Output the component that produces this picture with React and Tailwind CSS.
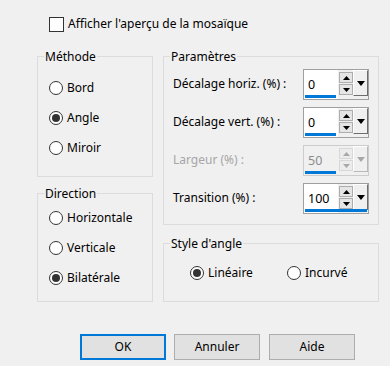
import React from "react";

function Arrow({ up, color, w = 7, h = 4 }) {
  return (
    <svg width={w} height={h} viewBox={`0 0 ${w} ${h}`} className="block">
      {up ? (
        <polygon points={`0,${h} ${w},${h} ${w / 2},0`} fill={color} />
      ) : (
        <polygon points={`0,0 ${w},0 ${w / 2},${h}`} fill={color} />
      )}
    </svg>
  );
}

function Spin({ value, disabled, bar }) {
  const arrow = disabled ? "#a8a8a8" : "#000000";
  return (
    <div
      className={`relative flex w-[66px] h-[31px] border bg-[#f0f0f0] ${
        disabled ? "border-[#cccccc]" : "border-[#a0a0a0]"
      }`}
    >
      <div
        className={`w-[34px] h-full flex items-center pl-[4px] ${
          disabled ? "bg-[#f0f0f0] text-[#8c8c8c]" : "bg-white text-black"
        }`}
      >
        <span className="text-[12.5px] leading-[16px]">{value}</span>
      </div>
      <div className="ml-[1px] w-[14px] flex flex-col gap-[1px] pt-[2px]">
        <div
          className={`h-[11px] border flex items-center justify-center ${
            disabled ? "border-[#d8d8d8] bg-[#ececec]" : "border-[#adadad] bg-[#e5e5e5]"
          }`}
        >
          <Arrow up color={arrow} />
        </div>
        <div
          className={`h-[11px] border flex items-center justify-center ${
            disabled ? "border-[#d8d8d8] bg-[#ececec]" : "border-[#adadad] bg-[#e5e5e5]"
          }`}
        >
          <Arrow color={arrow} />
        </div>
      </div>
      <div
        className={`w-[15px] h-[26px] bg-[#f0f0f0] border-t border-l border-t-white border-l-white border-r border-b flex items-center justify-center ${
          disabled ? "border-r-[#b8b8b8] border-b-[#b8b8b8]" : "border-r-[#6d6d6d] border-b-[#6d6d6d]"
        }`}
      >
        <Arrow color={arrow} w={8} h={5} />
      </div>
      <div
        className="absolute left-[1px] bottom-[1px] h-[3px] bg-[#0078d7]"
        style={{ width: bar }}
      />
    </div>
  );
}

function Radio({ label, checked }) {
  return (
    <div className="flex items-center h-[16px]">
      <div className="w-[14px] h-[14px] rounded-full border border-[#333333] bg-white flex items-center justify-center shrink-0">
        {checked && <div className="w-[8px] h-[8px] rounded-full bg-[#333333]" />}
      </div>
      <span className="ml-[4px] leading-[16px]">{label}</span>
    </div>
  );
}

function Group({ title, className, children }) {
  return (
    <div className={`relative border border-[#dcdcdc] ${className}`}>
      <span className="absolute -top-[8px] left-[6px] px-[1px] bg-[#f0f0f0] leading-[16px]">
        {title}
      </span>
      {children}
    </div>
  );
}

function Row({ label, value, disabled, bar }) {
  return (
    <div className="flex items-center h-[31px]">
      <span
        className={`w-[130px] leading-[16px] -mt-[2px] ${
          disabled ? "text-[#a6a6a6]" : "text-black"
        }`}
      >
        {label}
      </span>
      <Spin value={value} disabled={disabled} bar={bar} />
    </div>
  );
}

export default function App() {
  return (
    <div className="w-[390px] h-[366px] bg-[#f0f0f0] text-black text-[12px] font-['Noto_Sans',sans-serif] overflow-hidden">
      <div className="pt-[16px] pl-[49px] flex items-center">
        <div className="w-[15px] h-[15px] border border-[#333333] bg-white shrink-0" />
        <span className="ml-[4px] leading-[16px]">Afficher l'aperçu de la mosaïque</span>
      </div>

      <div className="flex mt-[24px] ml-[37px]">
        <div className="w-[116px] flex flex-col">
          <Group title="Méthode" className="h-[121px] pt-[23px] pl-[11px]">
            <div className="flex flex-col gap-[14px]">
              <Radio label="Bord" />
              <Radio label="Angle" checked />
              <Radio label="Miroir" />
            </div>
          </Group>
          <Group title="Direction" className="mt-[16px] h-[109px] pt-[16px] pl-[11px]">
            <div className="flex flex-col gap-[14px]">
              <Radio label="Horizontale" />
              <Radio label="Verticale" />
              <Radio label="Bilatérale" checked />
            </div>
          </Group>
        </div>

        <div className="ml-[10px] w-[216px] flex flex-col">
          <Group title="Paramètres" className="h-[169px] pt-[12px] pl-[9px]">
            <div className="flex flex-col gap-[7px]">
              <Row label="Décalage horiz. (%) :" value="0" bar={31} />
              <Row label="Décalage vert. (%) :" value="0" bar={31} />
              <Row label="Largeur (%) :" value="50" disabled bar={31} />
              <Row label="Transition (%) :" value="100" bar={62} />
            </div>
          </Group>
          <Group title="Style d'angle" className="mt-[18px] h-[59px] pt-[21px] pl-[26px]">
            <div className="flex">
              <div className="w-[97px]">
                <Radio label="Linéaire" checked />
              </div>
              <Radio label="Incurvé" />
            </div>
          </Group>
        </div>
      </div>

      <div className="flex mt-[32px] ml-[80px]">
        <button className="w-[86px] h-[26px] border-2 border-[#0078d7] bg-[#e1e1e1] text-[12px] leading-[16px] flex items-center justify-center">
          OK
        </button>
        <button className="ml-[8px] w-[86px] h-[26px] border border-[#adadad] bg-[#e1e1e1] text-[12px] leading-[16px] flex items-center justify-center">
          Annuler
        </button>
        <button className="ml-[9px] w-[86px] h-[26px] border border-[#adadad] bg-[#e1e1e1] text-[12px] leading-[16px] flex items-center justify-center">
          Aide
        </button>
      </div>
    </div>
  );
}
